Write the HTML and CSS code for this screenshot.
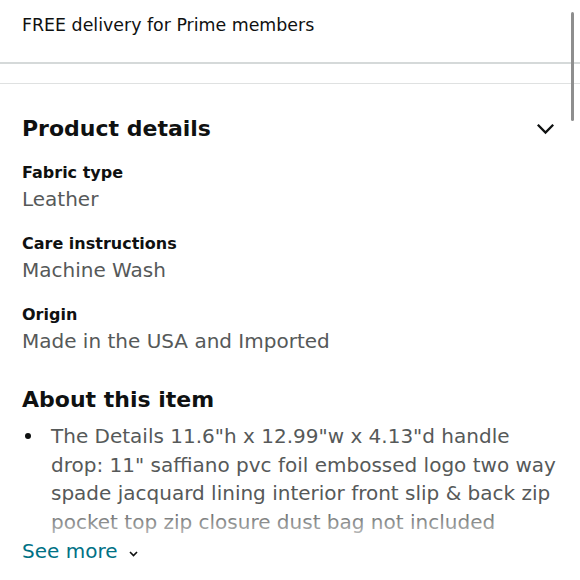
FILE: index.html
```html
<!DOCTYPE html>
<html lang="en">
<head>
<meta charset="utf-8">
<title>Product details</title>
<link rel="stylesheet" href="styles.css">
</head>
<body>
<div class="screen">
  <div class="delivery">FREE delivery for Prime members</div>
  <div class="rule rule-thick"></div>
  <div class="rule rule-thin"></div>

  <section class="details">
    <div class="section-head">
      <h2 class="section-title">Product details</h2>
      <svg class="head-chevron" width="17" height="11" viewBox="0 0 17 11" aria-hidden="true">
        <polyline points="1.6,1.6 8.5,8.6 15.4,1.6" fill="none" stroke="#0f1111" stroke-width="2.3" stroke-linecap="square"/>
      </svg>
    </div>
    <dl class="attrs">
      <div class="attr">
        <dt class="attr-label">Fabric type</dt>
        <dd class="attr-value">Leather</dd>
      </div>
      <div class="attr">
        <dt class="attr-label">Care instructions</dt>
        <dd class="attr-value">Machine Wash</dd>
      </div>
      <div class="attr">
        <dt class="attr-label">Origin</dt>
        <dd class="attr-value">Made in the USA and Imported</dd>
      </div>
    </dl>
  </section>

  <section class="about">
    <h2 class="section-title about-title">About this item</h2>
    <div class="bullets">
      <ul class="bullet-list">
        <li class="bullet"><span class="dot"></span><span class="bullet-text">The Details 11.6"h x 12.99"w x 4.13"d handle drop: 11" saffiano pvc foil embossed logo two way spade jacquard lining interior front slip &amp; back zip pocket top zip closure dust bag not included</span></li>
      </ul>
    </div>
    <a class="see-more" href="#">See more
      <svg class="more-chevron" width="9" height="6" viewBox="0 0 9 6" aria-hidden="true">
        <polyline points="1,1 4.5,4.6 8,1" fill="none" stroke="#0f1111" stroke-width="1.6"/>
      </svg>
    </a>
  </section>

  <div class="scrollbar"></div>
</div>
</body>
</html>
```

FILE: styles.css
```css
html, body {
  margin: 0;
  padding: 0;
  background: #ffffff;
}

body {
  font-family: "DejaVu Sans", "Noto Sans", sans-serif;
  color: #0f1111;
}

.screen {
  position: relative;
  width: 580px;
  height: 580px;
  overflow: hidden;
}

.delivery {
  padding: 13px 22px 0;
  font-size: 17.4px;
  line-height: 24px;
  color: #0f1111;
}

.rule {
  width: 100%;
}

.rule-thick {
  margin-top: 25px;
  height: 2px;
  background: #d5d9d9;
}

.rule-thin {
  margin-top: 19px;
  height: 1px;
  background: #dfe1e1;
}

.details,
.about {
  padding: 0 22px;
}

.section-head {
  display: flex;
  align-items: center;
  justify-content: space-between;
  margin-top: 30px;
}

.section-title {
  margin: 0;
  font-size: 22px;
  line-height: 30px;
  font-weight: 700;
  color: #0f1111;
}

.head-chevron {
  display: block;
  margin-right: 4px;
  margin-top: 1px;
}

.attrs {
  margin: 0;
}

.attr {
  margin-top: 17px;
}

.attr + .attr {
  margin-top: 18px;
}

.attr-label {
  font-size: 16px;
  line-height: 24px;
  font-weight: 700;
  color: #0f1111;
}

.attr-value {
  margin: 0;
  font-size: 20px;
  line-height: 29px;
  color: #565959;
}

.about-title {
  margin-top: 29px;
}

.bullets {
  position: relative;
  margin-top: 7px;
  max-height: 111px;
  overflow: hidden;
}

.bullets::after {
  content: "";
  position: absolute;
  left: 0;
  right: 0;
  bottom: 0;
  height: 26px;
  background: linear-gradient(to bottom, rgba(255,255,255,0), rgba(255,255,255,0.55));
}

.bullet-list {
  margin: 0;
  padding: 0;
  list-style: none;
}

.bullet {
  display: flex;
  align-items: flex-start;
  font-size: 20px;
  line-height: 28.7px;
  color: #565959;
}

.dot {
  flex: none;
  width: 6px;
  height: 6px;
  margin: 11px 20px 0 3px;
  border-radius: 50%;
  background: #0f1111;
}

.bullet-text {
  flex: 1;
}

.see-more {
  display: inline-flex;
  align-items: center;
  margin-top: 4px;
  font-size: 20px;
  line-height: 29px;
  color: #007185;
  text-decoration: none;
}

.more-chevron {
  display: block;
  margin-left: 12px;
  margin-top: 5px;
}

.scrollbar {
  position: absolute;
  top: 12px;
  left: 571px;
  width: 3px;
  height: 109px;
  border-radius: 2px;
  background: #8e8e8e;
}
```
